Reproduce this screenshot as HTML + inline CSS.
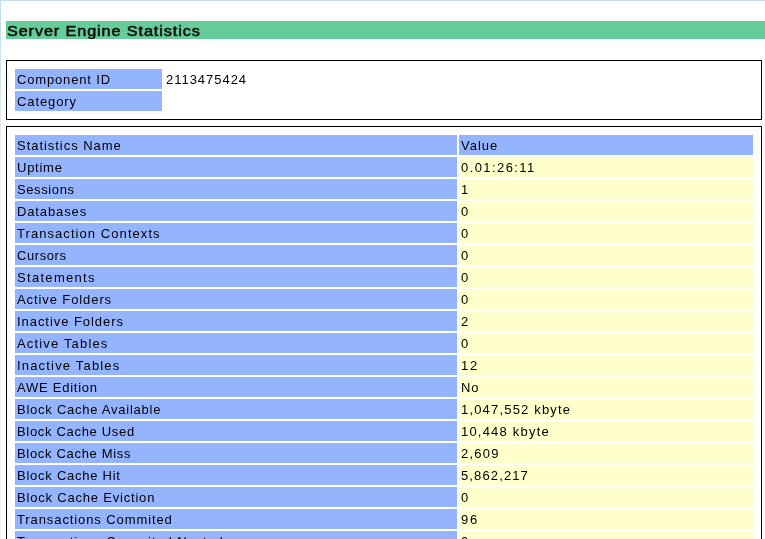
<!DOCTYPE html><html><head><meta charset='utf-8'><style>
html,body{margin:0;padding:0;background:#fff;}
body{-webkit-font-smoothing:antialiased;width:765px;height:539px;overflow:hidden;position:relative;font-family:"Liberation Sans",sans-serif;color:#000;}
.fr{position:absolute;background:#c4ddee;}
.title{position:absolute;left:6px;top:21px;width:759px;height:18px;background:#66cc99;overflow:hidden;}
.title span{will-change:transform;position:absolute;left:1px;top:1px;font-weight:normal;-webkit-text-stroke:0.6px #1a1a1a;font-size:15px;line-height:18px;white-space:nowrap;transform:scaleX(1.08);transform-origin:0 0;}
.box{position:absolute;border:1px solid #000;box-sizing:border-box;}
.c{position:absolute;height:20px;overflow:hidden;}
.c span{will-change:transform;position:absolute;left:2px;top:1px;font-size:13px;line-height:20px;white-space:nowrap;}
.b{background:#94b4ff;}
.y{background:#ffffcc;}
</style></head><body>
<div class='fr' style='left:0;top:0;width:765px;height:1px'></div>
<div class='fr' style='left:0;top:0;width:1px;height:539px;background:linear-gradient(to bottom,#c5ddec 0px,#c6ddec 25px,#eaf2fa 170px,#eaf2fa 539px)'></div>
<div class='title'><span style='letter-spacing:0.837px'>Server Engine Statistics</span></div>
<div class='box' style='left:6px;top:60px;width:756px;height:60px'></div>
<div class='c b' style='left:15px;top:69px;width:147px'><span style='letter-spacing:0.841px'>Component ID</span></div>
<div class='c' style='left:164px;top:69px;width:200px'><span style='letter-spacing:0.972px'>2113475424</span></div>
<div class='c b' style='left:15px;top:91px;width:147px'><span style='letter-spacing:0.893px'>Category</span></div>
<div class='box' style='left:6px;top:126px;width:756px;height:500px'></div>
<div class='c b' style='left:15px;top:135px;width:442px'><span style='letter-spacing:0.964px'>Statistics Name</span></div>
<div class='c b' style='left:459px;top:135px;width:294px'><span style='letter-spacing:1.000px'>Value</span></div>
<div class='c b' style='left:15px;top:157px;width:442px'><span style='letter-spacing:0.750px'>Uptime</span></div>
<div class='c y' style='left:459px;top:157px;width:294px'><span style='letter-spacing:1.417px'>0.01:26:11</span></div>
<div class='c b' style='left:15px;top:179px;width:442px'><span style='letter-spacing:0.607px'>Sessions</span></div>
<div class='c y' style='left:459px;top:179px;width:294px'><span style='letter-spacing:0.750px'>1</span></div>
<div class='c b' style='left:15px;top:201px;width:442px'><span style='letter-spacing:0.875px'>Databases</span></div>
<div class='c y' style='left:459px;top:201px;width:294px'><span style='letter-spacing:0.750px'>0</span></div>
<div class='c b' style='left:15px;top:223px;width:442px'><span style='letter-spacing:1.066px'>Transaction Contexts</span></div>
<div class='c y' style='left:459px;top:223px;width:294px'><span style='letter-spacing:0.750px'>0</span></div>
<div class='c b' style='left:15px;top:245px;width:442px'><span style='letter-spacing:0.583px'>Cursors</span></div>
<div class='c y' style='left:459px;top:245px;width:294px'><span style='letter-spacing:0.750px'>0</span></div>
<div class='c b' style='left:15px;top:267px;width:442px'><span style='letter-spacing:1.306px'>Statements</span></div>
<div class='c y' style='left:459px;top:267px;width:294px'><span style='letter-spacing:0.750px'>0</span></div>
<div class='c b' style='left:15px;top:289px;width:442px'><span style='letter-spacing:0.904px'>Active Folders</span></div>
<div class='c y' style='left:459px;top:289px;width:294px'><span style='letter-spacing:0.750px'>0</span></div>
<div class='c b' style='left:15px;top:311px;width:442px'><span style='letter-spacing:0.950px'>Inactive Folders</span></div>
<div class='c y' style='left:459px;top:311px;width:294px'><span style='letter-spacing:0.750px'>2</span></div>
<div class='c b' style='left:15px;top:333px;width:442px'><span style='letter-spacing:1.167px'>Active Tables</span></div>
<div class='c y' style='left:459px;top:333px;width:294px'><span style='letter-spacing:0.750px'>0</span></div>
<div class='c b' style='left:15px;top:355px;width:442px'><span style='letter-spacing:1.179px'>Inactive Tables</span></div>
<div class='c y' style='left:459px;top:355px;width:294px'><span style='letter-spacing:1.750px'>12</span></div>
<div class='c b' style='left:15px;top:377px;width:442px'><span style='letter-spacing:0.750px'>AWE Edition</span></div>
<div class='c y' style='left:459px;top:377px;width:294px'><span style='letter-spacing:0.750px'>No</span></div>
<div class='c b' style='left:15px;top:399px;width:442px'><span style='letter-spacing:0.750px'>Block Cache Available</span></div>
<div class='c y' style='left:459px;top:399px;width:294px'><span style='letter-spacing:1.179px'>1,047,552 kbyte</span></div>
<div class='c b' style='left:15px;top:421px;width:442px'><span style='letter-spacing:0.683px'>Block Cache Used</span></div>
<div class='c y' style='left:459px;top:421px;width:294px'><span style='letter-spacing:1.205px'>10,448 kbyte</span></div>
<div class='c b' style='left:15px;top:443px;width:442px'><span style='letter-spacing:0.683px'>Block Cache Miss</span></div>
<div class='c y' style='left:459px;top:443px;width:294px'><span style='letter-spacing:1.250px'>2,609</span></div>
<div class='c b' style='left:15px;top:465px;width:442px'><span style='letter-spacing:0.750px'>Block Cache Hit</span></div>
<div class='c y' style='left:459px;top:465px;width:294px'><span style='letter-spacing:1.125px'>5,862,217</span></div>
<div class='c b' style='left:15px;top:487px;width:442px'><span style='letter-spacing:0.803px'>Block Cache Eviction</span></div>
<div class='c y' style='left:459px;top:487px;width:294px'><span style='letter-spacing:infpx'>0</span></div>
<div class='c b' style='left:15px;top:509px;width:442px'><span style='letter-spacing:0.900px'>Transactions Commited</span></div>
<div class='c y' style='left:459px;top:509px;width:294px'><span style='letter-spacing:1.750px'>96</span></div>
<div class='c b' style='left:15px;top:531px;width:442px'><span style='letter-spacing:0.898px'>Transactions Commited Nested</span></div>
<div class='c y' style='left:459px;top:531px;width:294px'><span style='letter-spacing:0.750px'>0</span></div>
</body></html>
